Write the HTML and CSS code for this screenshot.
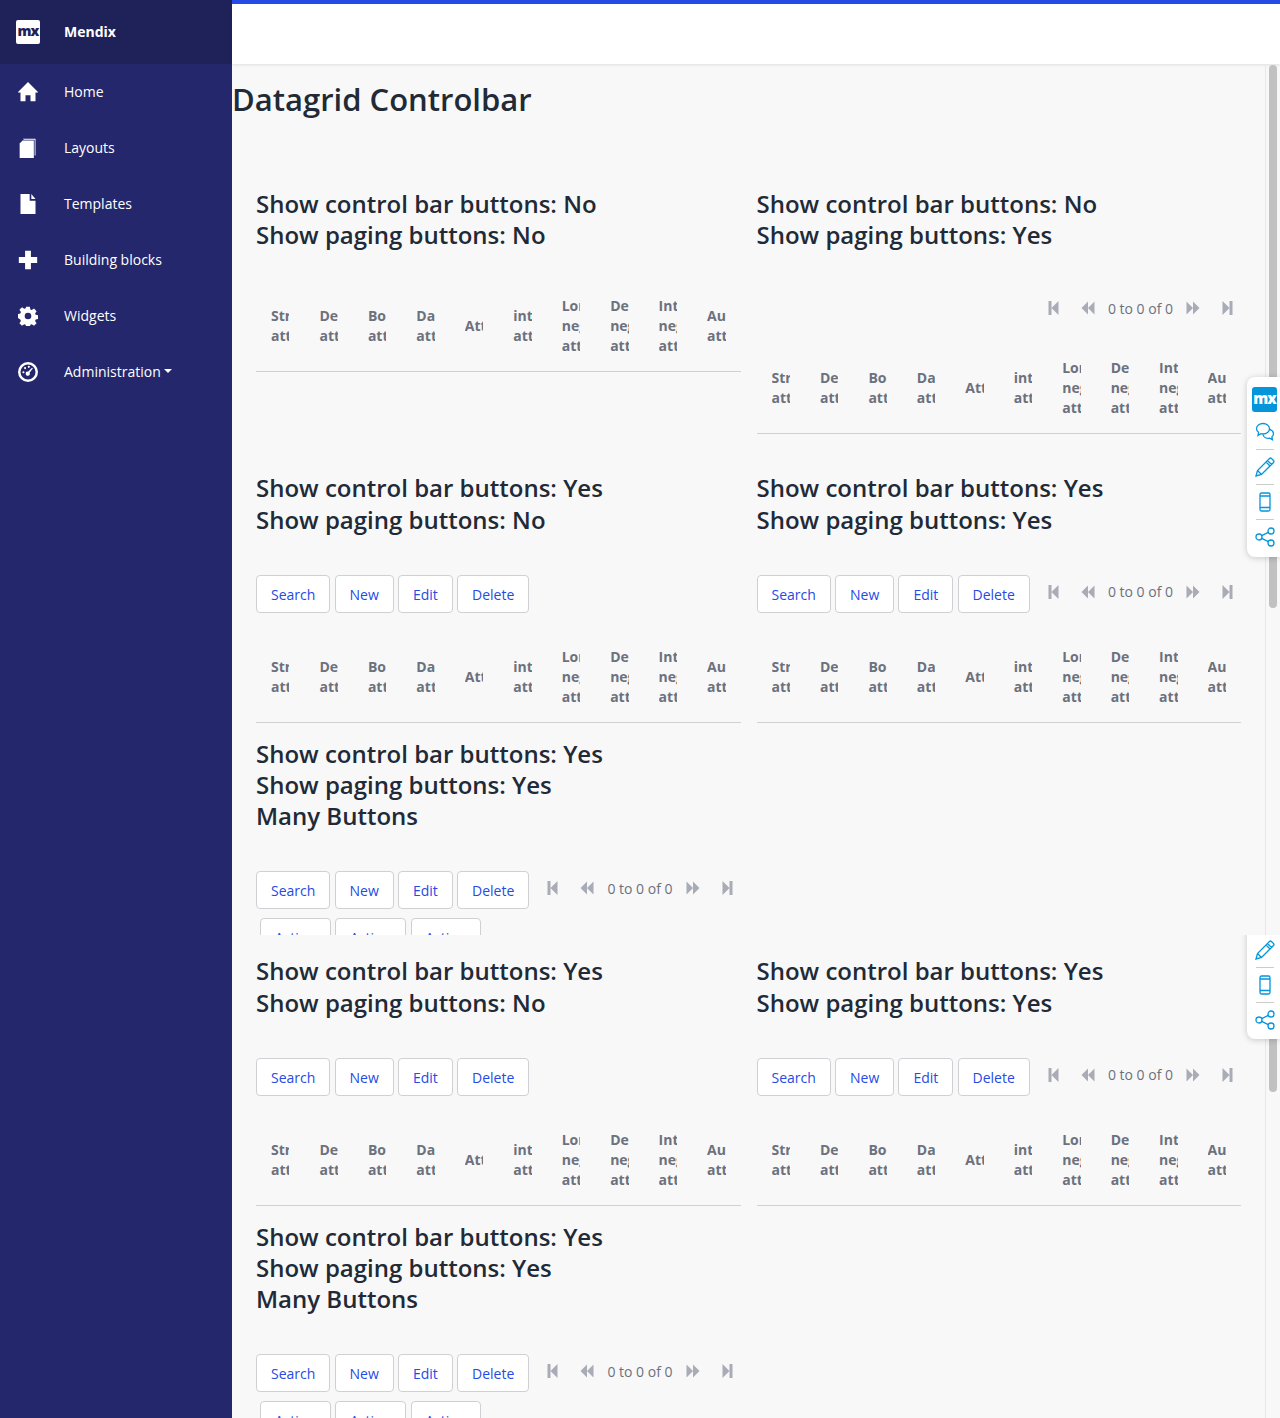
FILE: index.html
```html
<!doctype html>
<html lang="en">
  <head>
    <meta charset="UTF-8" />
    <meta name="viewport" content="width=device-width, initial-scale=1.0" />
    <title>Datagrid Controlbar - Mendix</title>
    <link rel="stylesheet" href="styles.css">
  </head>
  <body>
    <aside class="sidebar">
      <div class="brand">
        <span class="brand-logo">mx</span>
        <span class="brand-name">Mendix</span>
      </div>
      <nav>
        <a class="nav-item"><svg class="nav-icon" viewBox="0 0 24 24"><path d="M12 0 24.500 12.500H21V23h-6v-7H9v7H3V12.500H-.5z"/></svg>Home</a>
        <a class="nav-item"><svg class="nav-icon" viewBox="0 0 24 24"><path d="M6 1h15v20h-1V2H7z"/><path d="M5.500 3H19v21H2V6.500z"/></svg>Layouts</a>
        <a class="nav-item"><svg class="nav-icon" viewBox="0 0 24 24"><path d="M3 0h11v8h7v16H3zM16 0l5 6h-5z"/></svg>Templates</a>
        <a class="nav-item"><svg class="nav-icon" viewBox="0 0 24 24"><path d="M8.500 1h7v7.500H23v7h-7.500V23h-7v-7.500H1v-7h7.500z"/></svg>Building blocks</a>
        <a class="nav-item"><svg class="nav-icon" viewBox="0 0 24 24"><path fill-rule="evenodd" d="M9.800 1h4.400l.6 3.200 1.700.7 2.700-1.800 3.100 3.100-1.800 2.700.7 1.700 3.200.6v4.400l-3.200.6-.7 1.700 1.800 2.700-3.100 3.100-2.700-1.800-1.700.7-.6 3.200H9.800l-.6-3.200-1.700-.7-2.700 1.800-3.100-3.100 1.800-2.700-.7-1.700L-.4 14V9.600l3.200-.6.7-1.700-1.800-2.700 3.100-3.100 2.700 1.800 1.700-.7zM12 8a4 4 0 1 0 0 8 4 4 0 0 0 0-8z"/></svg>Widgets</a>
        <a class="nav-item"><svg class="nav-icon" viewBox="0 0 24 24"><path fill-rule="evenodd" d="M12 0a12 12 0 1 1 0 24 12 12 0 0 1 0-24zm0 3a9 9 0 1 0 0 18 9 9 0 0 0 0-18zm4.800 3.800 1 1-3.900 5.200a2.500 2.500 0 1 1-1.900-1.400zM6.500 11a1.300 1.300 0 1 1 0 2.600 1.300 1.300 0 0 1 0-2.600zM8.500 6a1.300 1.300 0 1 1 0 2.600 1.300 1.300 0 0 1 0-2.600zM13 4.500a1.300 1.300 0 1 1 0 2.600 1.300 1.300 0 0 1 0-2.600z"/></svg>Administration<span class="caret"></span></a>
      </nav>
    </aside>

    <main class="main">
      <div class="topbar"></div>

      <section class="shot shot-first">
        <div class="content">
          <h1 class="page-title">Datagrid Controlbar</h1>

          <div class="row row-first">
            <div>
              <h3 class="grid-title">Show control bar buttons: No<br>Show paging buttons: No</h3>
              <div class="dg-head">
                <div class="dg-cell">String attribute</div><div class="dg-cell">Decimal attribute</div><div class="dg-cell">Boolean attribute</div><div class="dg-cell">Date attribute</div><div class="dg-cell">Attribute</div>
                <div class="dg-cell">integer attribute</div><div class="dg-cell">Long negative attribute</div><div class="dg-cell">Decimal negative attribute</div><div class="dg-cell">Integer negative attribute</div><div class="dg-cell">Autonumber attribute</div>
              </div>
            </div>
            <div>
              <h3 class="grid-title">Show control bar buttons: No<br>Show paging buttons: Yes</h3>
              <div class="toolbar toolbar-pager">
                <div class="pager">
                  <span class="pager-btn"><svg viewBox="0 0 14 14"><path d="M1.500 0h3v14h-3zM4.500 7l7-7v14z"/></svg></span>
                  <span class="pager-btn"><svg viewBox="0 0 14 14"><path d="M7 7l6.500-6.500v13zM.5 7L7 .5v13z"/></svg></span>
                  <span class="pager-text">0 to 0 of 0</span>
                  <span class="pager-btn"><svg viewBox="0 0 14 14"><path d="M7 7L.5.5v13zM13.500 7L7 .5v13z"/></svg></span>
                  <span class="pager-btn"><svg viewBox="0 0 14 14"><path d="M12.500 0h-3v14h3zM9.500 7l-7-7v14z"/></svg></span>
                </div>
              </div>
              <div class="dg-head">
                <div class="dg-cell">String attribute</div><div class="dg-cell">Decimal attribute</div><div class="dg-cell">Boolean attribute</div><div class="dg-cell">Date attribute</div><div class="dg-cell">Attribute</div>
                <div class="dg-cell">integer attribute</div><div class="dg-cell">Long negative attribute</div><div class="dg-cell">Decimal negative attribute</div><div class="dg-cell">Integer negative attribute</div><div class="dg-cell">Autonumber attribute</div>
              </div>
            </div>
          </div>

          <div class="row">
            <div>
              <h3 class="grid-title">Show control bar buttons: Yes<br>Show paging buttons: No</h3>
              <div class="toolbar">
                <a class="btn">Search</a><a class="btn">New</a><a class="btn">Edit</a><a class="btn">Delete</a>
              </div>
              <div class="dg-head">
                <div class="dg-cell">String attribute</div><div class="dg-cell">Decimal attribute</div><div class="dg-cell">Boolean attribute</div><div class="dg-cell">Date attribute</div><div class="dg-cell">Attribute</div>
                <div class="dg-cell">integer attribute</div><div class="dg-cell">Long negative attribute</div><div class="dg-cell">Decimal negative attribute</div><div class="dg-cell">Integer negative attribute</div><div class="dg-cell">Autonumber attribute</div>
              </div>
            </div>
            <div>
              <h3 class="grid-title">Show control bar buttons: Yes<br>Show paging buttons: Yes</h3>
              <div class="toolbar">
                <a class="btn">Search</a><a class="btn">New</a><a class="btn">Edit</a><a class="btn">Delete</a>
                <div class="pager">
                  <span class="pager-btn"><svg viewBox="0 0 14 14"><path d="M1.500 0h3v14h-3zM4.500 7l7-7v14z"/></svg></span>
                  <span class="pager-btn"><svg viewBox="0 0 14 14"><path d="M7 7l6.500-6.500v13zM.5 7L7 .5v13z"/></svg></span>
                  <span class="pager-text">0 to 0 of 0</span>
                  <span class="pager-btn"><svg viewBox="0 0 14 14"><path d="M7 7L.5.5v13zM13.500 7L7 .5v13z"/></svg></span>
                  <span class="pager-btn"><svg viewBox="0 0 14 14"><path d="M12.500 0h-3v14h3zM9.500 7l-7-7v14z"/></svg></span>
                </div>
              </div>
              <div class="dg-head">
                <div class="dg-cell">String attribute</div><div class="dg-cell">Decimal attribute</div><div class="dg-cell">Boolean attribute</div><div class="dg-cell">Date attribute</div><div class="dg-cell">Attribute</div>
                <div class="dg-cell">integer attribute</div><div class="dg-cell">Long negative attribute</div><div class="dg-cell">Decimal negative attribute</div><div class="dg-cell">Integer negative attribute</div><div class="dg-cell">Autonumber attribute</div>
              </div>
            </div>
          </div>

          <div class="row">
            <div>
              <h3 class="grid-title">Show control bar buttons: Yes<br>Show paging buttons: Yes<br>Many Buttons</h3>
              <div class="toolbar toolbar-many">
                <a class="btn">Search</a><a class="btn">New</a><a class="btn">Edit</a><a class="btn">Delete</a>
                <div class="pager">
                  <span class="pager-btn"><svg viewBox="0 0 14 14"><path d="M1.500 0h3v14h-3zM4.500 7l7-7v14z"/></svg></span>
                  <span class="pager-btn"><svg viewBox="0 0 14 14"><path d="M7 7l6.500-6.500v13zM.5 7L7 .5v13z"/></svg></span>
                  <span class="pager-text">0 to 0 of 0</span>
                  <span class="pager-btn"><svg viewBox="0 0 14 14"><path d="M7 7L.5.5v13zM13.500 7L7 .5v13z"/></svg></span>
                  <span class="pager-btn"><svg viewBox="0 0 14 14"><path d="M12.500 0h-3v14h3zM9.500 7l-7-7v14z"/></svg></span>
                </div>
                <div class="extra-buttons">
                  <a class="btn">Action</a><a class="btn">Action</a><a class="btn">Action</a>
                </div>
              </div>
            </div>
          </div>
        </div>
        <div class="scroll-track"><div class="scroll-thumb thumb-first"></div></div>

        <div class="feedback feedback-full">
          <span class="feedback-logo">mx</span>
          <svg class="fb-icon" viewBox="0 0 20 20"><path d="M8 1.500c3.600 0 6.500 2.300 6.500 5.200S11.600 12 8 12c-.8 0-1.500-.1-2.200-.3L3 13.500l.6-3.200C2.300 9.400 1.500 8.100 1.500 6.700c0-2.900 2.900-5.200 6.500-5.200z"/><path d="M14.500 7.500c2.300.5 4 2.200 4 4.200 0 1.200-.6 2.300-1.600 3l.5 3-2.700-1.600c-3 .6-6-.8-6.700-3.500"/></svg>
          <span class="fb-sep"></span>
          <svg class="fb-icon" viewBox="0 0 20 20"><path d="M1 19l1.500-5.500L14.500 1.500a1.500 1.500 0 0 1 2 0l2 2a1.500 1.500 0 0 1 0 2L6.500 17.500zM2.500 13.500l4 4M12.500 3.500l4 4M11 5l4 4"/></svg>
          <span class="fb-sep"></span>
          <svg class="fb-icon" viewBox="0 0 20 20"><rect x="5" y="1" width="10" height="18" rx="1.500"/><path d="M5 4h10M5 15.500h10"/></svg>
          <span class="fb-sep"></span>
          <svg class="fb-icon" viewBox="0 0 20 20"><circle cx="4" cy="10" r="3"/><circle cx="16" cy="4" r="3"/><circle cx="16" cy="16" r="3"/><path d="M6.700 8.700l6.600-3.400M6.700 11.300l6.600 3.400"/></svg>
        </div>
      </section>

      <section class="shot shot-second">
        <div class="content">
          <div class="row">
            <div>
              <h3 class="grid-title">Show control bar buttons: Yes<br>Show paging buttons: No</h3>
              <div class="toolbar">
                <a class="btn">Search</a><a class="btn">New</a><a class="btn">Edit</a><a class="btn">Delete</a>
              </div>
              <div class="dg-head">
                <div class="dg-cell">String attribute</div><div class="dg-cell">Decimal attribute</div><div class="dg-cell">Boolean attribute</div><div class="dg-cell">Date attribute</div><div class="dg-cell">Attribute</div>
                <div class="dg-cell">integer attribute</div><div class="dg-cell">Long negative attribute</div><div class="dg-cell">Decimal negative attribute</div><div class="dg-cell">Integer negative attribute</div><div class="dg-cell">Autonumber attribute</div>
              </div>
            </div>
            <div>
              <h3 class="grid-title">Show control bar buttons: Yes<br>Show paging buttons: Yes</h3>
              <div class="toolbar">
                <a class="btn">Search</a><a class="btn">New</a><a class="btn">Edit</a><a class="btn">Delete</a>
                <div class="pager">
                  <span class="pager-btn"><svg viewBox="0 0 14 14"><path d="M1.500 0h3v14h-3zM4.500 7l7-7v14z"/></svg></span>
                  <span class="pager-btn"><svg viewBox="0 0 14 14"><path d="M7 7l6.500-6.500v13zM.5 7L7 .5v13z"/></svg></span>
                  <span class="pager-text">0 to 0 of 0</span>
                  <span class="pager-btn"><svg viewBox="0 0 14 14"><path d="M7 7L.5.5v13zM13.500 7L7 .5v13z"/></svg></span>
                  <span class="pager-btn"><svg viewBox="0 0 14 14"><path d="M12.500 0h-3v14h3zM9.500 7l-7-7v14z"/></svg></span>
                </div>
              </div>
              <div class="dg-head">
                <div class="dg-cell">String attribute</div><div class="dg-cell">Decimal attribute</div><div class="dg-cell">Boolean attribute</div><div class="dg-cell">Date attribute</div><div class="dg-cell">Attribute</div>
                <div class="dg-cell">integer attribute</div><div class="dg-cell">Long negative attribute</div><div class="dg-cell">Decimal negative attribute</div><div class="dg-cell">Integer negative attribute</div><div class="dg-cell">Autonumber attribute</div>
              </div>
            </div>
          </div>

          <div class="row">
            <div>
              <h3 class="grid-title">Show control bar buttons: Yes<br>Show paging buttons: Yes<br>Many Buttons</h3>
              <div class="toolbar toolbar-many">
                <a class="btn">Search</a><a class="btn">New</a><a class="btn">Edit</a><a class="btn">Delete</a>
                <div class="pager">
                  <span class="pager-btn"><svg viewBox="0 0 14 14"><path d="M1.500 0h3v14h-3zM4.500 7l7-7v14z"/></svg></span>
                  <span class="pager-btn"><svg viewBox="0 0 14 14"><path d="M7 7l6.500-6.500v13zM.5 7L7 .5v13z"/></svg></span>
                  <span class="pager-text">0 to 0 of 0</span>
                  <span class="pager-btn"><svg viewBox="0 0 14 14"><path d="M7 7L.5.5v13zM13.500 7L7 .5v13z"/></svg></span>
                  <span class="pager-btn"><svg viewBox="0 0 14 14"><path d="M12.500 0h-3v14h3zM9.500 7l-7-7v14z"/></svg></span>
                </div>
                <div class="extra-buttons">
                  <a class="btn">Action</a><a class="btn">Action</a><a class="btn">Action</a>
                </div>
              </div>
            </div>
          </div>
        </div>
        <div class="scroll-track"><div class="scroll-thumb thumb-second"></div></div>

        <div class="feedback feedback-clipped">
          <svg class="fb-icon" viewBox="0 0 20 20"><path d="M1 19l1.500-5.500L14.500 1.500a1.500 1.500 0 0 1 2 0l2 2a1.500 1.500 0 0 1 0 2L6.500 17.500zM2.500 13.500l4 4M12.500 3.500l4 4M11 5l4 4"/></svg>
          <span class="fb-sep"></span>
          <svg class="fb-icon" viewBox="0 0 20 20"><rect x="5" y="1" width="10" height="18" rx="1.500"/><path d="M5 4h10M5 15.500h10"/></svg>
          <span class="fb-sep"></span>
          <svg class="fb-icon" viewBox="0 0 20 20"><circle cx="4" cy="10" r="3"/><circle cx="16" cy="4" r="3"/><circle cx="16" cy="16" r="3"/><path d="M6.700 8.700l6.600-3.400M6.700 11.300l6.600 3.400"/></svg>
        </div>
      </section>
    </main>
  </body>
</html>
```

FILE: styles.css
```css
html, body {
  height: 100%;
}
body {
  margin: 0;
  height: 1418px;
  overflow: hidden;
  display: flex;
  font-family: "Open Sans", sans-serif;
  font-size: 14px;
  color: #212a36;
  background: #f8f8f8;
}

/* sidebar */
.sidebar {
  width: 232px;
  flex-shrink: 0;
  background: #24276c;
  color: #fff;
}
.brand {
  height: 64px;
  display: flex;
  align-items: center;
  padding-left: 16px;
  background: #1f2259;
}
.brand-logo {
  width: 24px;
  height: 24px;
  margin-right: 24px;
  border-radius: 2px;
  background: #fff;
  color: #1f2259;
  font-size: 14px;
  font-weight: 800;
  line-height: 22px;
  letter-spacing: -1px;
  text-align: center;
}
.brand-name {
  position: relative;
  top: -1px;
  font-weight: 700;
}
.nav-item {
  height: 54px;
  padding-bottom: 2px;
  display: flex;
  align-items: center;
  padding-left: 18px;
}
.nav-icon {
  width: 20px;
  height: 20px;
  margin-top: 2px;
  margin-right: 26px;
  fill: #fff;
}
.caret {
  margin-left: 3px;
  border-top: 4px solid #fff;
  border-left: 4px solid transparent;
  border-right: 4px solid transparent;
}

/* main column */
.main {
  flex: 1;
  min-width: 0;
}
.topbar {
  position: relative;
  height: 60px;
  border-top: 4px solid #264ae5;
  background: #fff;
  box-shadow: 0 1px 3px rgba(0,0,0,0.1);
}
.shot {
  position: relative;
  display: flex;
  overflow: hidden;
}
.shot-first {
  height: 871px;
}
.shot-second {
  height: 483px;
}
.shot-second .content {
  padding-top: 20.4px;
}
.content {
  flex: 1;
  min-width: 0;
}
.scroll-track {
  width: 15px;
  flex-shrink: 0;
  border-left: 1px solid #e7e7e7;
  box-sizing: border-box;
}
.scroll-thumb {
  width: 8px;
  margin-left: 3px;
  border-radius: 4px;
  background: #c1c1c1;
}
.thumb-first {
  height: 543px;
  margin-top: 1px;
}
.thumb-second {
  height: 157px;
}

.page-title {
  margin: 0;
  padding-top: 15px;
  height: 109px;
  font-size: 31px;
  font-weight: 600;
  line-height: 40px;
}
.row {
  display: grid;
  grid-template-columns: 1fr 1fr;
  gap: 16px;
  padding: 0 24px;
  margin-bottom: 15px;
}
.row > div {
  min-width: 0;
}
.row-first {
  margin-bottom: 38px;
}
.grid-title {
  margin: 0 0 30px;
  font-size: 24px;
  font-weight: 600;
  line-height: 1.3;
}
.row-first .grid-title {
  margin-bottom: 31px;
}

/* control bar */
.toolbar {
  display: flex;
  flex-wrap: wrap;
  align-items: flex-start;
  column-gap: 4.2px;
  padding-top: 10px;
  margin-bottom: 19px;
}
.toolbar-pager {
  margin-bottom: 18px;
}
.btn {
  height: 38px;
  box-sizing: border-box;
  padding: 0 14px;
  border: 1px solid #ced0d3;
  border-radius: 4px;
  background: #fff;
  color: #264ae5;
  line-height: 37px;
}
.pager {
  display: flex;
  align-items: center;
  height: 34px;
  margin-left: auto;
  margin-right: -3px;
  color: #6c717e;
}
.pager-btn {
  width: 34px;
  display: flex;
  justify-content: center;
}
.pager-btn svg {
  width: 14px;
  height: 14px;
  fill: #a9acb6;
}
.pager-text {
  margin: 0 3px;
}
.extra-buttons {
  flex-basis: 100%;
  display: flex;
  column-gap: 4.8px;
  margin-top: 9px;
  margin-left: 4px;
}
.extra-buttons .btn {
  width: 70.5px;
  text-align: center;
  padding: 0;
}

/* datagrid header */
.dg-head {
  display: grid;
  grid-template-columns: repeat(10, 1fr);
  align-items: center;
  padding: 15px 0;
  border-bottom: 1px solid #ced0d3;
}
.dg-cell {
  margin: 0 15px;
  overflow: hidden;
  min-width: 0;
  color: #6c717e;
  font-weight: 700;
  line-height: 20px;
}

/* feedback widget */
.feedback {
  position: absolute;
  right: 0;
  width: 33px;
  display: flex;
  flex-direction: column;
  align-items: center;
  box-sizing: border-box;
  padding-left: 2px;
  background: #fff;
  box-shadow: 0 1px 6px rgba(0,0,0,0.2);
}
.feedback-full {
  top: 313px;
  height: 180px;
  padding-top: 10px;
  border-radius: 8px 0 0 8px;
}
.feedback-clipped {
  top: -8px;
  height: 112px;
  padding-top: 13px;
  border-radius: 0 0 0 8px;
}
.feedback-logo {
  width: 25px;
  height: 25px;
  border-radius: 3px;
  background: #0595db;
  color: #fff;
  font-size: 15px;
  font-weight: 800;
  line-height: 23px;
  letter-spacing: -1px;
  text-align: center;
  margin-bottom: 10px;
}
.fb-icon {
  width: 20px;
  height: 20px;
  flex-shrink: 0;
  fill: none;
  stroke: #0595db;
  stroke-width: 1.300;
}
.fb-sep {
  width: 18px;
  height: 1px;
  margin: 7px 0;
  flex-shrink: 0;
  background: #ccc;
}
```
